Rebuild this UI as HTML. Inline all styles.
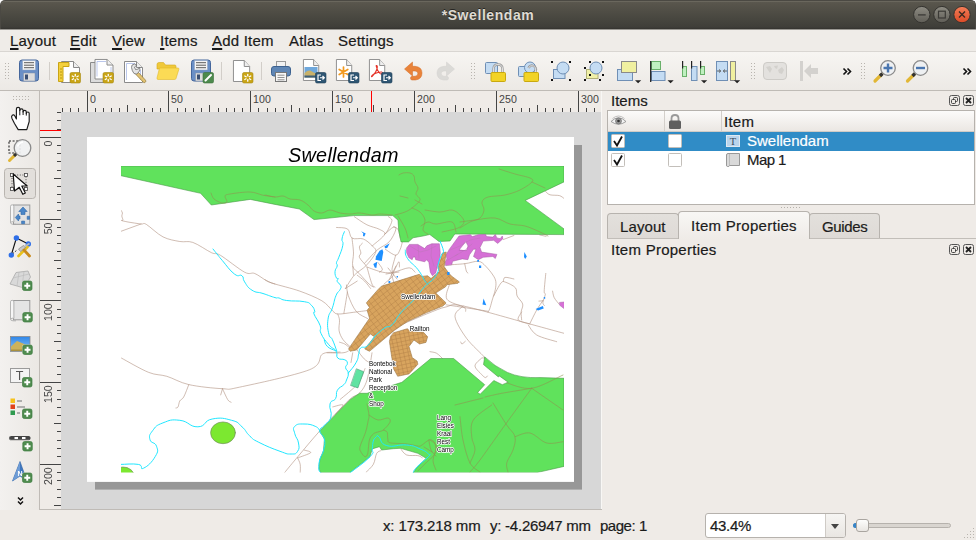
<!DOCTYPE html>
<html><head><meta charset="utf-8"><title>*Swellendam</title>
<style>
*{box-sizing:border-box;margin:0;padding:0}
html,body{width:976px;height:540px;overflow:hidden;background:#f0edea;font-family:"Liberation Sans","DejaVu Sans",sans-serif;font-size:15px;color:#1c1c1c}
.abs{position:absolute}
#win{position:absolute;left:0;top:0;width:976px;height:540px;background:#efebe7;overflow:hidden}
#title{position:absolute;left:0;top:0;width:976px;height:29px;background:linear-gradient(#5b584f 0,#57544b 12%,#47463f 65%,#3f3e39 93%,#34332f 100%);border-radius:5px 5px 0 0;border:1px solid #4b4943;border-bottom:none;box-shadow:inset 0 1px 0 #6a675d}
#title .t{position:absolute;left:-1px;width:976px;top:5px;line-height:18px;text-align:center;font-weight:bold;font-size:14px;color:#dfdbd2;text-shadow:0 -1px 0 #262522;letter-spacing:.58px}
#menubar{position:absolute;left:0;top:29px;width:976px;height:23px;background:#efece8;border-top:1px solid #9a9893;border-bottom:1px solid #d9d6d2}
#menubar span{position:absolute;top:2px;font-size:15px;color:#1a1a1a;white-space:nowrap;letter-spacing:.2px;-webkit-text-stroke:.2px currentColor}
#menubar u{text-decoration:underline;text-underline-offset:2px;text-decoration-thickness:1.5px}
#toolbar{position:absolute;left:0;top:52px;width:976px;height:39px;background:linear-gradient(#f7f5f2,#ece9e5);border-bottom:1px solid #bfbbb6}
#lefttb{position:absolute;left:0;top:91px;width:40px;height:419px;background:linear-gradient(90deg,#f3f1ef,#ebe8e4);border-right:1px solid #bfbbb6}
#hruler{position:absolute;left:40px;top:91px;width:562px;height:21px;background:#efebe7}
#vruler{position:absolute;left:40px;top:112px;width:21px;height:398px;background:#efebe7}
#canvas{position:absolute;left:61px;top:112px;width:540px;height:398px;background:#d7d7d7;overflow:hidden}
.lbl{font-size:15px;white-space:nowrap;color:#1a1a1a;line-height:18px;-webkit-text-stroke:.2px currentColor}
.tab{border:1px solid #b7b3ae;border-bottom:none;border-radius:4px 4px 0 0;background:linear-gradient(#e3e0dc,#dedad6)}
.tab span{position:absolute;white-space:nowrap;line-height:18px;-webkit-text-stroke:.2px currentColor}
.tab.act{background:linear-gradient(#f8f7f5,#efebe7)}
#status{position:absolute;left:0;top:510px;width:976px;height:30px;background:#efebe7}
</style></head><body>
<div id="win">
<div class="abs" style="left:0;top:0;width:976px;height:10px;background:#fff"></div>
<div id="title"><div class="t">*Swellendam</div>
<svg class="abs" style="left:904px;top:-1px" width="70" height="30" viewBox="905 0.600 70 30"><defs><linearGradient id="wg" x1="0" y1="0" x2="0" y2="1"><stop offset="0" stop-color="#8e8c83"/><stop offset="1" stop-color="#5f5d56"/></linearGradient><linearGradient id="wr" x1="0" y1="0" x2="0" y2="1"><stop offset="0" stop-color="#f37e58"/><stop offset="1" stop-color="#dc4a26"/></linearGradient></defs>
<circle cx="921.800" cy="15.200" r="8.200" fill="url(#wg)" stroke="#34332f" stroke-width="1"/><circle cx="941.900" cy="15.200" r="8.200" fill="url(#wg)" stroke="#34332f" stroke-width="1"/><circle cx="962" cy="15.200" r="8.200" fill="url(#wr)" stroke="#34332f" stroke-width="1"/>
<path d="M918 15.500H925.700" stroke="#3b3a36" stroke-width="1.300"/><rect x="938.500" y="11.800" width="6.800" height="6.800" fill="none" stroke="#3b3a36" stroke-width="1.200"/><path d="M959 12.200L965 18.200M965 12.200L959 18.200" stroke="#3b2a20" stroke-width="1.400"/></svg>
</div>
<div id="menubar">
<span style="left:10px"><u>L</u>ayout</span><span style="left:70px"><u>E</u>dit</span><span style="left:112px"><u>V</u>iew</span><span style="left:160px"><u>I</u>tems</span><span style="left:212px"><u>A</u>dd Item</span><span style="left:289px">Atlas</span><span style="left:338px">Settings</span>
</div>
<div id="toolbar"><svg class="abs" style="left:0;top:0" width="976" height="38" viewBox="0 52 976 38">
<defs>
<g id="hd" fill="#b9b5af"><rect x="0" y="0" width="1" height="1"/><rect x="3" y="0" width="1" height="1"/><rect x="0" y="3" width="1" height="1"/><rect x="3" y="3" width="1" height="1"/><rect x="0" y="6" width="1" height="1"/><rect x="3" y="6" width="1" height="1"/><rect x="0" y="9" width="1" height="1"/><rect x="3" y="9" width="1" height="1"/><rect x="0" y="12" width="1" height="1"/><rect x="3" y="12" width="1" height="1"/><rect x="0" y="15" width="1" height="1"/><rect x="3" y="15" width="1" height="1"/></g>
<g id="page"><path d="M.5.5H12.500L18.500 6.500V21.500H.5Z" fill="#fff" stroke="#8a8a8a"/><path d="M12.500.5V6.500H18.500" fill="#eee" stroke="#8a8a8a"/></g>
<g id="star"><rect x="0" y="0" width="10.500" height="10.500" rx="1.500" fill="#c9a415" stroke="#a88a10" stroke-width=".6"/><g stroke="#fff" stroke-width="1.300" stroke-linecap="round"><path d="M5.250 1.800V8.700M2.250 3.500L8.250 7M8.250 3.500L2.250 7"/></g><circle cx="5.250" cy="5.250" r="1.500" fill="#c9a415"/></g>
<g id="exp"><rect x="0" y="0" width="10.500" height="10.500" rx="1.500" fill="#2f5673" stroke="#1f4059" stroke-width=".6"/><path d="M5.500 2.500H2.500V8H5.500M4.500 5.250H8.500M7 3.500L8.800 5.250 7 7" fill="none" stroke="#fff" stroke-width="1.200"/></g>
<g id="floppy"><rect x=".5" y=".5" width="19" height="21" rx="2.500" fill="#6a8fc6" stroke="#44669c"/><rect x="3.500" y="1" width="13" height="9.500" fill="#f4f4f4" stroke="#8aa0c0" stroke-width=".5"/><path d="M5 3.200H15M5 5.700H15M5 8.200H15" stroke="#4a4a4a" stroke-width=".9"/><rect x="4.500" y="13.500" width="11.500" height="8" fill="#dcdcdc" stroke="#7f8fa8" stroke-width=".5"/><rect x="6" y="15" width="3" height="5" fill="#3a4f73"/></g>
<path id="dda" d="M-.5 1.200H5.700L2.600 4.200Z" fill="#222"/>
<g id="sqh" fill="#111"><rect x="0" y="0" width="2" height="2"/></g>
</defs>
<use href="#hd" x="5" y="63"/><use href="#hd" x="471" y="63"/><use href="#hd" x="751" y="63"/><use href="#hd" x="861" y="63"/>
<path d="M49.500 62V80M221.500 62V80M261.500 62V80" stroke="#d2cec9"/>
<!-- save -->
<use href="#floppy" x="19" y="59.500"/>
<!-- new layout -->
<g transform="translate(58 61)"><use href="#page" x="3"/><path d="M.5 1.500H11V5.500H5V20.500H.5Z" fill="#f4d03c" stroke="#c9a415"/><path d="M2 8H4M2 11H4M2 14H4M2 17H4" stroke="#a88a10" stroke-width=".8"/><use href="#star" x="12" y="11.500"/></g>
<!-- duplicate -->
<g transform="translate(90 59)"><path d="M.5 3.500H14.500V23.500H.5Z" fill="#dcdcdc" stroke="#8a8a8a"/><g transform="translate(4.500 0) scale(1 .93)"><use href="#page"/></g><path d="M7 2.500H16M7 2.500V17.500M21 8V17.500" stroke="#a9b9e6" stroke-width=".8" fill="none"/><use href="#star" x="13" y="13.500"/></g>
<!-- manager -->
<g transform="translate(124 61)"><use href="#page" x="0" y="0"/><path d="M2.500 2.500H11M2.500 2.500V19M16.500 9V19" stroke="#a9b9e6" stroke-width=".8" fill="none"/><path d="M14.200 11.200L21.500 19.200Q22.300 20.300 21.300 21.200T19.300 21.200L11.800 13.300Z" fill="#e3c373" stroke="#8c7430" stroke-width=".7"/><path d="M7.500 6.500Q7 3.500 10.500 3L13 4 10.500 6 11.500 8.500 14.500 8 15.500 6Q17 9 14.500 11.500L12.500 13 10 12.500Q8 10 7.500 6.500Z" fill="#e4e4e4" stroke="#6f6f6f" stroke-width=".8" stroke-linejoin="round"/></g>
<!-- folder -->
<g transform="translate(156.500 62)"><path d="M.5 2.500Q.5 .5 2.500 .5H7L9 3H18.500Q19.500 3 19.500 4.500V7H.5Z" fill="#f0c93a" stroke="#d4aa20" stroke-width=".6"/><path d="M3 6H21.500Q22.800 6 22.300 7.500L19.500 16.500Q19.200 17.500 18 17.500H1.500Q.3 17.500 .5 16Z" fill="#fbdb55" stroke="#e0b82a" stroke-width=".6"/></g>
<!-- save as -->
<use href="#floppy" x="191" y="59.500"/>
<g transform="translate(203 72.500)"><rect x="0" y="0" width="10.500" height="10.500" rx="1.500" fill="#4d8a4d" stroke="#3a6e3a" stroke-width=".6"/><path d="M2.500 8L8 2.500" stroke="#fff" stroke-width="2" stroke-linecap="round"/></g>
<!-- new page -->
<g transform="translate(233 60)"><use href="#page" x="0" y="0" transform="scale(.9 1)"/><use href="#star" x="9.500" y="12.500"/></g>
<!-- printer -->
<g transform="translate(271 61)"><rect x="5.500" y=".5" width="9" height="6" fill="#f2f2f2" stroke="#9a9a9a"/><rect x=".5" y="5.500" width="19" height="9.500" rx="2.500" fill="#5f86b5" stroke="#3d6290"/><rect x="4.500" y="11.500" width="11" height="9" fill="#f6f6f6" stroke="#777"/><path d="M6.500 14.200H13.500M6.500 16.500H13.500M6.500 18.800H13.500" stroke="#777" stroke-width=".8"/></g>
<!-- export image -->
<g transform="translate(303 59)"><use href="#page" x="0" y="0" transform="scale(.85 1)"/><rect x="1.500" y="8" width="13" height="10.500" fill="#6fa8dc"/><path d="M1.500 14Q6 10 9 12.500T14.500 13V18.500H1.500Z" fill="#c9b26a"/><path d="M1.500 16.500H14.500V18.500H1.500Z" fill="#3e5f78"/><use href="#exp" x="12.500" y="13.500"/></g>
<!-- export svg -->
<g transform="translate(336 59)"><use href="#page" x="0" y="0" transform="scale(.85 1)"/><g stroke="#f39a1f" stroke-width="1.700" stroke-linecap="round"><path d="M7.500 8V18M3.200 10.500L11.800 15.500M11.800 10.500L3.200 15.500"/></g><use href="#exp" x="12.500" y="13.500"/></g>
<!-- export pdf -->
<g transform="translate(369 59)"><use href="#page" x="0" y="0" transform="scale(.85 1)"/><path d="M7 6.500Q9 6 8 10T3 17.500Q2 18 3 16.500T9 13.500 13.500 14.500Q12 16 10 13.500T7 6.500" fill="none" stroke="#e5332a" stroke-width="1.100"/><use href="#exp" x="12.500" y="13.500"/></g>
<!-- undo -->
<g fill="#e9833a" stroke="#d26a22" stroke-width=".5" stroke-linejoin="round"><path d="M404.500 69L412.500 62V66.300H415Q422 67 422 73T415.500 80H412Q410.500 79.800 410.500 78.200T412 76.300H415Q417.800 76 417.800 73.500T415 71H412.500V76Z"/></g>
<!-- redo -->
<g fill="#dbdad7" stroke="#d2d1ce" stroke-width=".5" stroke-linejoin="round"><path d="M454.500 69L446.500 62V66.300H444Q437 67 437 73T443.500 80H447Q448.500 79.800 448.500 78.200T447 76.300H444Q441.200 76 441.200 73.500T444 71H446.500V76Z"/></g>
<!-- lock -->
<g transform="translate(485 62)"><rect x=".5" y=".5" width="12" height="11" rx="1" fill="#c4dcf3" stroke="#6f8fb5"/><path d="M8.500 11V7Q8.500 2.500 13 2.500T17.500 7V11" fill="none" stroke="#9a9a9a" stroke-width="2.400"/><path d="M8.500 11V7Q8.500 2.500 13 2.500T17.500 7V11" fill="none" stroke="#e0e0e0" stroke-width="1"/><rect x="6" y="10.500" width="14.500" height="9" rx="1" fill="#f2d326" stroke="#c9a90f"/></g>
<!-- unlock -->
<g transform="translate(518 62)"><rect x=".5" y="4.500" width="10" height="10" rx="1" fill="#c4dcf3" stroke="#6f8fb5"/><circle cx="12" cy="5.500" r="5.500" fill="#c4dcf3" stroke="#6f8fb5"/><path d="M10.500 6Q12 2.500 15.500 4T17.500 9V11" fill="none" stroke="#9a9a9a" stroke-width="2.400"/><path d="M10.500 6Q12 2.500 15.500 4T17.500 9V11" fill="none" stroke="#e0e0e0" stroke-width="1"/><rect x="6" y="10.500" width="14.500" height="9" rx="1" fill="#f2d326" stroke="#c9a90f"/></g>
<!-- group -->
<g transform="translate(551 61)"><rect x="2.500" y="8.500" width="11.500" height="9" fill="#c4dcf3" stroke="#6f8fb5"/><circle cx="12" cy="7" r="6" fill="#c4dcf3" stroke="#6f8fb5"/><use href="#sqh" x="0" y="0"/><use href="#sqh" x="18" y="0"/><use href="#sqh" x="0" y="18"/><use href="#sqh" x="18" y="18"/></g>
<!-- ungroup -->
<g transform="translate(584 61)"><rect x="2.500" y="8.500" width="11.500" height="9" fill="#f0f0a8" stroke="#b0b078"/><circle cx="12" cy="7" r="6" fill="#c4dcf3" stroke="#6f8fb5"/><use href="#sqh" x="5" y="0"/><use href="#sqh" x="18" y="0"/><use href="#sqh" x="0" y="6"/><use href="#sqh" x="18" y="13"/><use href="#sqh" x="5" y="13"/><use href="#sqh" x="0" y="18"/><use href="#sqh" x="15" y="18"/></g>
<!-- raise -->
<g transform="translate(617 61)"><rect x=".5" y="8.500" width="15" height="11" fill="#c4dcf3" stroke="#6f8fb5"/><rect x="4.500" y=".5" width="15" height="11" fill="#f0f0a0" stroke="#8a8a8a"/><use href="#dda" x="18.500" y="18"/></g>
<!-- align -->
<g transform="translate(650 61)"><rect x="1.500" y=".5" width="9" height="8" fill="#c0f0c0" stroke="#6ab06a"/><rect x="1.500" y="10.500" width="13.500" height="9" fill="#c4dcf3" stroke="#6f8fb5"/><path d="M.7 0V21" stroke="#222" stroke-width="1.300"/><use href="#dda" x="18" y="18"/></g>
<!-- distribute -->
<g transform="translate(682 61)"><rect x=".5" y="5.500" width="4" height="10" fill="#c0f0c0" stroke="#6ab06a"/><rect x="9.500" y="5.500" width="5.500" height="14" fill="#c4dcf3" stroke="#6f8fb5"/><rect x="18.500" y="5.500" width="4" height="8" fill="#c0f0c0" stroke="#6ab06a"/><path d="M.6 0V7.500M9.600 0V7.500M18.600 0V7.500" stroke="#222" stroke-width="1.200"/><use href="#dda" x="19.500" y="18"/></g>
<!-- resize -->
<g transform="translate(716 61)"><rect x=".5" y=".5" width="11" height="19" fill="#c4dcf3" stroke="#6f8fb5"/><rect x="14.500" y=".5" width="5" height="19" fill="#f0f0a0" stroke="#8a8a8a"/><path d="M1 10H4.500M3 8.500L4.800 10 3 11.500M11 10H7.500M9 8.500L7.200 10 9 11.500" stroke="#555" stroke-width=".9" fill="none"/><use href="#dda" x="18.500" y="18"/></g>
<!-- atlas preview disabled -->
<g transform="translate(763 62)"><rect x=".5" y=".5" width="23" height="17" rx="3.500" fill="#e3e1de" stroke="#cdcbc7"/><path d="M3 5L7 4 9 7 7 11 5 8ZM11 4L15 3.500 14 7 12 6ZM15 8L19 5 21 8 19 12 16 11Z" fill="#d3d1cd"/></g>
<!-- first feature disabled -->
<g transform="translate(798 61)"><rect x="2" y="0" width="3" height="20" fill="#d3d1ce"/><path d="M6 10L13 3V7H20V13H13V17Z" fill="#d3d1ce"/></g>
<!-- chevrons -->
<g fill="none" stroke="#111" stroke-width="1.600"><path d="M843.500 68.500L846.500 71.500 843.500 74.500M847.500 68.500L850.500 71.500 847.500 74.500M963.500 68.500L966.500 71.500 963.500 74.500M967.500 68.500L970.500 71.500 967.500 74.500"/></g>
<!-- zoom in -->
<g id="zin" transform="translate(873 60)"><path d="M2 21L8.500 14.500" stroke="#e2b735" stroke-width="3.200" stroke-linecap="round"/><path d="M7 16L9.500 13.500" stroke="#333" stroke-width="3.200"/><circle cx="15" cy="8" r="7.300" fill="#eef0f2" stroke="#8a8a8a" stroke-width="1.300"/><path d="M15 3.500V12.500M10.500 8H19.500" stroke="#4a76b0" stroke-width="2.400"/></g>
<g transform="translate(905.500 60)"><path d="M2 21L8.500 14.500" stroke="#e2b735" stroke-width="3.200" stroke-linecap="round"/><path d="M7 16L9.500 13.500" stroke="#333" stroke-width="3.200"/><circle cx="15" cy="8" r="7.300" fill="#eef0f2" stroke="#8a8a8a" stroke-width="1.300"/><path d="M10.500 8H19.500" stroke="#4a76b0" stroke-width="2.400"/></g>
</svg>
</div>
<div id="lefttb"><svg class="abs" style="left:0;top:-1px" width="40" height="420" viewBox="0 90 40 420">
<defs>
<g id="plus"><rect x="-.6" y="-.6" width="10.700" height="10.700" rx="2.300" fill="#eef3ee"/><rect x="0" y="0" width="9.500" height="9.500" rx="1.800" fill="#4f8c4f" stroke="#3f7a3f" stroke-width=".7"/><path d="M4.750 1.800V7.700M1.800 4.750H7.700" stroke="#fff" stroke-width="1.900"/></g>
</defs>
<g fill="#b9b5af"><rect x="13" y="96" width="1" height="1"/><rect x="16" y="96" width="1" height="1"/><rect x="19" y="96" width="1" height="1"/><rect x="22" y="96" width="1" height="1"/><rect x="25" y="96" width="1" height="1"/><rect x="28" y="96" width="1" height="1"/><rect x="13" y="99" width="1" height="1"/><rect x="16" y="99" width="1" height="1"/><rect x="19" y="99" width="1" height="1"/><rect x="22" y="99" width="1" height="1"/><rect x="25" y="99" width="1" height="1"/><rect x="28" y="99" width="1" height="1"/></g>
<!-- pan hand -->
<path d="M16.400 119V109Q16.400 107.300 18.100 107.300T19.800 109V110.400Q19.900 108.900 21.500 108.900T23.100 110.500V111.900Q23.200 110.400 24.700 110.400T26.300 112V113.400Q26.400 112 27.800 112T29.200 113.600V121.500L26.800 129.600H18.200L14.500 123.500 12 118.500Q11 116.300 12.300 115.200T15 116.200Z" fill="#fff" stroke="#1a1a1a" stroke-width="1.150" stroke-linejoin="round"/>
<path d="M19.800 109.500V115.300M23.100 111V115M26.300 112.500V115.600" stroke="#1a1a1a" stroke-width="1"/>
<!-- zoom -->
<g><rect x="9" y="141" width="11" height="12" fill="none" stroke="#222" stroke-width="1.100" stroke-dasharray="2 1.600"/><path d="M9.500 160.500L15.500 154.500" stroke="#e2b735" stroke-width="3" stroke-linecap="round"/><path d="M14 156L16.500 153.500" stroke="#333" stroke-width="3"/><circle cx="22.500" cy="148" r="8.300" fill="#f0f1f2" fill-opacity=".92" stroke="#8a8a8a" stroke-width="1.300"/><path d="M17.500 146.500Q19 142.500 23 142" stroke="#fff" stroke-width="1.600" fill="none"/></g>
<!-- select (pressed) -->
<rect x="4.500" y="168.500" width="31" height="30" rx="3" fill="#e2dfdb" stroke="#b9b5b0"/>
<rect x="12" y="175" width="14" height="14" fill="none" stroke="#444" stroke-width=".9" stroke-dasharray="1 1.600"/>
<g fill="#fff" stroke="#444" stroke-width=".8"><rect x="10.500" y="173.500" width="3" height="3"/><rect x="24.500" y="173.500" width="3" height="3"/><rect x="10.500" y="187.500" width="3" height="3"/><rect x="24.500" y="187.500" width="3" height="3"/></g>
<path d="M13.200 174L27.200 186H21.800L25.300 193 22.800 194.300 19.300 187.300 14.500 191Z" fill="#fff" stroke="#111" stroke-width="1.200" stroke-linejoin="round"/>
<!-- move content -->
<g transform="translate(10 204.500)"><rect x="3.500" y=".5" width="16.300" height="19.300" fill="#e2e2e2" stroke="#9a9a9a"/><path d="M.5 1.800Q.5 .3 2.200 .3T3.900 1.800V17.500Q2 16.500 .5 18Z" fill="#f6f6f6" stroke="#a6a6a6" stroke-width=".8"/><path d="M.5 18Q.8 20 3 19.800H6" fill="none" stroke="#a6a6a6" stroke-width=".8"/><g fill="#4a86c8" stroke="#2f68a8" stroke-width=".6" stroke-linejoin="round"><path d="M13 2.500L17.200 7H15V10H11V7H8.800Z"/><path d="M5.300 13L8.500 9.500V11.500H10V14.500H8.500V16.500Z"/><rect x="17.200" y="11.800" width="2.300" height="3"/><rect x="11.600" y="16.600" width="3" height="2.600"/></g></g>
<!-- edit nodes -->
<g><path d="M16.400 238L11.300 255M16.400 238L28.300 244" fill="none" stroke="#111" stroke-width="1.100"/><path d="M11.300 255L17 250" fill="none" stroke="#111" stroke-width="1" stroke-dasharray="1.200 1.200"/><circle cx="16.400" cy="238" r="2.700" fill="#2f6fe8"/><circle cx="11.300" cy="255.100" r="2.700" fill="#2f6fe8"/><circle cx="28.300" cy="244" r="2.700" fill="#2f6fe8"/><path d="M18.500 256L27.500 247" stroke="#e8c11c" stroke-width="2.600" stroke-linecap="round"/><path d="M18.500 249L23.500 245.500 25.500 248 20.500 251.500Z" fill="#c9c9c9" stroke="#777" stroke-width=".6"/><path d="M24 250L29.500 256" stroke="#c98a1c" stroke-width="2.800" stroke-linecap="round"/><path d="M24.500 246.500L29.500 243.500" stroke="#b9b9b9" stroke-width="1.600"/></g>
<!-- add 3d map -->
<g><path d="M10 284L16 272.500 28 271 30.500 277 24 288Z" fill="#d9d9d9" stroke="#a9a9a9" stroke-width=".8"/><path d="M13 278L29 274M19 272L17 286M24 271.500L22 287" stroke="#bdbdbd" stroke-width=".7"/><use href="#plus" x="22.500" y="281"/></g>
<!-- add map -->
<g transform="translate(10 300)"><rect x="3.500" y=".5" width="16.300" height="19.300" fill="#e4e4e4" stroke="#9a9a9a"/><path d="M.5 1.800Q.5 .3 2.200 .3T3.900 1.800V18.500Q2 17.500 .5 19Z" fill="#f6f6f6" stroke="#a6a6a6" stroke-width=".8"/><path d="M.5 19Q.8 21 3 20.800H6" fill="none" stroke="#a6a6a6" stroke-width=".8"/><use href="#plus" x="12.800" y="12.500"/></g>
<!-- add picture -->
<g><defs><linearGradient id="sky" x1="0" y1="0" x2="0" y2="1"><stop offset="0" stop-color="#2f86e8"/><stop offset="1" stop-color="#8cc4f4"/></linearGradient></defs><rect x="10.500" y="336.500" width="19.500" height="15" fill="url(#sky)" stroke="#8a8a8a" stroke-width=".8"/><path d="M11 346.500L17 341 30 346.500V351H11Z" fill="#cdb25a"/><path d="M11 349.500H30V351H11Z" fill="#a8903f"/><use href="#plus" x="22.800" y="345"/></g>
<!-- add label -->
<g><rect x="10.500" y="368.500" width="19" height="14" fill="#f4f4f4" stroke="#9a9a9a"/><text x="19.500" y="380.300" font-family="Liberation Sans, sans-serif" font-size="12.500" text-anchor="middle" fill="#555" style="will-change:transform">T</text><use href="#plus" x="22.500" y="377.500"/></g>
<!-- add legend -->
<g><rect x="10.500" y="398.500" width="4.500" height="4.500" fill="#f6c21c"/><rect x="10.500" y="404.500" width="4.500" height="4.500" fill="#e0431c"/><rect x="10.500" y="410.500" width="4.500" height="4.500" fill="#2f9a4f"/><path d="M17 401H22M17 407H25M17 413H20" stroke="#999" stroke-width="1.300"/><use href="#plus" x="22.500" y="409"/></g>
<!-- add scalebar -->
<g><rect x="9.500" y="436.500" width="20.500" height="3.200" rx="1" fill="#fff" stroke="#444" stroke-width="1"/><path d="M10 438.100H14.500M18 438.100H22M25.500 438.100H30" stroke="#444" stroke-width="2.400"/><use href="#plus" x="22.800" y="441.500"/></g>
<!-- north arrow -->
<g><path d="M20 461.500L12.500 481 20 476 27 481Z" fill="#3f78c0" stroke="#2d5f9f" stroke-width=".6"/><path d="M20 461.500V476L12.500 481Z" fill="#6e9cd6"/><text x="20" y="476" font-family="Liberation Sans, sans-serif" font-size="7" font-weight="bold" text-anchor="middle" fill="#fff">N</text><use href="#plus" x="22.500" y="473"/></g>
<!-- chevron down -->
<path d="M18 497.500L20.500 500 23 497.500M18 501.500L20.500 504 23 501.500" fill="none" stroke="#111" stroke-width="1.500"/>
</svg>
</div>
<div id="hruler"><svg class="abs" style="left:0;top:0" width="562" height="21" viewBox="40 91 562 21" shape-rendering="crispEdges">
<path d="M62.5 108V112M70.5 108V112M78.5 108V112M87.5 91V112M95.5 108V112M103.5 108V112M111.5 108V112M119.5 108V112M127.5 105V112M136.5 108V112M144.5 108V112M152.5 108V112M160.5 108V112M168.5 91V112M177.5 108V112M185.5 108V112M193.5 108V112M201.5 108V112M209.5 105V112M218.5 108V112M226.5 108V112M234.5 108V112M242.5 108V112M250.5 91V112M258.5 108V112M267.5 108V112M275.5 108V112M283.5 108V112M291.5 105V112M299.5 108V112M308.5 108V112M316.5 108V112M324.5 108V112M332.5 91V112M340.5 108V112M349.5 108V112M357.5 108V112M365.5 108V112M373.5 105V112M381.5 108V112M390.5 108V112M398.5 108V112M406.5 108V112M414.5 91V112M422.5 108V112M430.5 108V112M439.5 108V112M447.5 108V112M455.5 105V112M463.5 108V112M471.5 108V112M480.5 108V112M488.5 108V112M496.5 91V112M504.5 108V112M512.5 108V112M521.5 108V112M529.5 108V112M537.5 105V112M545.5 108V112M553.5 108V112M562.5 108V112M570.5 108V112M578.5 91V112M586.5 108V112M594.5 108V112" stroke="#444" stroke-width="1" fill="none"/>
<path d="M371.500 91V112" stroke="#f00" stroke-width="1"/>
<g font-family="Liberation Sans, sans-serif" font-size="10.600" fill="#444" shape-rendering="auto">
<text x="90.1" y="102.800">0</text>
<text x="171.1" y="102.800">50</text>
<text x="253.1" y="102.800">100</text>
<text x="335.1" y="102.800">150</text>
<text x="417.1" y="102.800">200</text>
<text x="499.1" y="102.800">250</text>
<text x="581.1" y="102.800">300</text>
</g></svg></div>
<div id="vruler"><svg class="abs" style="left:0;top:0" width="21" height="398" viewBox="40 112 21 398" shape-rendering="crispEdges">
<path d="M57 112.5H61M57 120.5H61M57 129.5H61M40 137.5H61M57 145.5H61M57 153.5H61M57 161.5H61M57 170.5H61M54 178.5H61M57 186.5H61M57 194.5H61M57 202.5H61M57 210.5H61M40 219.5H61M57 227.5H61M57 235.5H61M57 243.5H61M57 251.5H61M54 260.5H61M57 268.5H61M57 276.5H61M57 284.5H61M57 292.5H61M40 300.5H61M57 309.5H61M57 317.5H61M57 325.5H61M57 333.5H61M54 341.5H61M57 350.5H61M57 358.5H61M57 366.5H61M57 374.5H61M40 382.5H61M57 390.5H61M57 399.5H61M57 407.5H61M57 415.5H61M54 423.5H61M57 431.5H61M57 440.5H61M57 448.5H61M57 456.5H61M40 464.5H61M57 472.5H61M57 480.5H61M57 489.5H61M57 497.5H61M54 505.5H61" stroke="#444" stroke-width="1" fill="none"/>
<path d="M40 130.500H61" stroke="#f00" stroke-width="1"/>
<g font-family="Liberation Sans, sans-serif" font-size="10.600" fill="#444" shape-rendering="auto">
<text transform="translate(52 146.5) rotate(-90)">0</text>
<text transform="translate(52 234.3) rotate(-90)">50</text>
<text transform="translate(52 321.0) rotate(-90)">100</text>
<text transform="translate(52 403.0) rotate(-90)">150</text>
<text transform="translate(52 485.0) rotate(-90)">200</text>
</g></svg></div>
<div id="canvas"><svg class="abs" style="left:0;top:0;will-change:transform" width="540" height="398" viewBox="61 112 540 398">
<rect x="95" y="145" width="487" height="344.600" fill="#979797"/>
<rect x="87" y="137" width="487" height="344.900" fill="#fff"/>
<defs><clipPath id="mc"><rect x="121" y="166" width="443" height="306.600"/></clipPath></defs>
<text x="288" y="162.400" font-family="Liberation Sans, sans-serif" font-style="italic" font-size="19.800" letter-spacing=".3" fill="#000">Swellendam</text>
<g clip-path="url(#mc)" fill="none" stroke-linejoin="round" stroke-linecap="round">
<!-- roads outside -->
<g stroke="#b0907f" stroke-width=".6">
<path d="M121.0 210.4C121.2 210.8 122.4 212.1 122.5 213.0C122.6 213.9 121.7 214.8 121.8 216.0C121.9 217.2 123.0 219.2 123.0 220.0C123.0 220.8 120.7 220.2 121.5 220.5C122.3 220.8 124.8 221.4 128.0 222.0C131.2 222.6 137.9 223.6 141.0 224.0C144.1 224.4 142.8 222.3 146.5 224.5C150.2 226.7 157.4 234.1 163.0 236.9C168.6 239.7 174.8 240.6 179.8 241.5C184.8 242.4 187.6 240.6 192.8 242.4C198.1 244.2 206.7 250.4 211.3 252.6C215.9 254.8 215.1 252.1 220.6 255.4C226.1 258.7 238.9 269.2 244.6 272.2C250.3 275.2 251.1 272.0 254.8 273.5C258.5 275.0 263.5 279.2 266.9 281.0C270.3 282.8 273.6 283.5 275.0 284.0M121.0 231.3L141.0 224.0"/>
<path d="M265.0 279.7C266.4 280.3 267.5 281.6 273.3 283.5C279.1 285.4 291.6 288.2 299.7 291.1C307.8 294.0 316.4 297.6 321.9 300.8C327.3 304.0 329.8 308.3 332.4 310.5C335.0 312.7 334.2 313.7 337.7 314.0C341.2 314.3 348.5 312.9 353.5 312.3C358.5 311.7 365.2 310.8 367.6 310.5M337.7 314.0C338.0 315.0 339.3 317.4 339.5 320.2C339.7 323.0 338.5 327.6 339.1 330.8C339.7 334.0 341.2 337.0 343.0 339.6C344.8 342.2 348.8 345.4 350.0 346.6"/>
<path d="M327.2 352.8C329.8 352.8 339.5 353.1 343.0 352.8C346.5 352.5 347.4 351.3 348.3 351.0"/>
<path d="M346.5 285.0C346.8 286.8 346.7 291.2 348.3 295.6C349.9 300.0 353.0 307.6 356.2 311.4C359.4 315.2 365.7 317.3 367.6 318.5M347.4 292.0C347.1 293.8 346.3 299.1 345.7 302.6C345.1 306.1 344.2 311.4 343.9 313.2M339.5 342.2C340.4 342.5 343.2 343.1 344.8 344.0C346.4 344.9 348.5 346.9 349.2 347.5M352.7 352.8L351.0 362.5M357.1 350.1C358.3 351.6 362.1 356.8 364.2 358.9C366.2 361.0 368.5 361.9 369.4 362.5"/>
<path d="M121.5 358.1C126.0 360.5 141.1 369.4 148.7 372.4C156.2 375.4 160.1 374.3 166.8 376.3C173.5 378.3 179.5 382.5 188.8 384.6C198.1 386.7 214.1 388.3 222.5 388.7C230.9 389.1 224.9 390.3 239.4 387.2C253.9 384.1 295.5 375.3 309.3 369.8C323.1 364.3 318.0 357.1 322.3 354.2C326.6 351.3 332.1 352.8 335.0 352.4C337.9 352.0 339.2 352.1 340.0 352.0M188.8 384.6C188.0 386.7 185.2 394.3 183.7 397.0C182.2 399.7 180.8 399.2 179.8 400.9C178.9 402.6 178.7 405.8 178.0 407.0C177.3 408.2 176.2 407.8 175.9 407.9M222.5 388.7L220.7 394.9M222.5 388.7C223.4 390.5 226.3 397.4 227.7 399.6C229.1 401.9 230.5 401.8 231.1 402.2"/>
<path d="M284.6 472.6C286.9 469.8 292.6 462.8 298.5 455.9C304.4 448.9 311.5 440.1 319.8 430.9C328.1 421.6 341.9 406.7 348.5 400.4C355.1 394.1 356.5 396.4 359.6 393.0C362.7 389.6 364.9 386.7 367.0 380.0C369.1 373.3 371.2 357.3 372.0 352.8M297.6 457.9C298.0 459.0 299.8 461.9 300.2 464.4C300.6 466.8 300.2 471.2 300.2 472.6M297.6 457.9C299.8 457.0 309.5 454.0 310.6 452.7C311.7 451.4 305.2 450.5 304.1 450.1M340.2 399.4C343.1 396.8 353.7 388.8 357.8 383.7C361.9 378.6 363.8 371.1 365.0 368.6M332.8 406.9C334.5 406.6 342.5 403.8 343.0 405.0C343.5 406.2 336.8 412.8 335.6 414.3"/>
<path d="M366.1 472.2C367.3 470.9 371.5 467.5 373.3 464.4C375.1 461.2 375.4 455.6 376.7 453.3C378.0 451.0 380.4 451.1 381.1 450.6M400.6 448.7C401.6 449.8 403.8 453.9 406.7 455.0C409.6 456.1 415.2 455.1 417.8 455.6C420.4 456.1 421.5 457.4 422.2 457.8"/>

<!-- east roads -->
<path d="M446.0 265.0C449.1 264.8 459.3 264.3 464.7 263.7C470.1 263.1 474.9 260.9 478.4 261.3C481.9 261.7 483.2 263.8 485.6 266.1C488.0 268.4 491.2 272.4 492.9 275.0C494.6 277.6 495.4 279.1 495.8 281.5C496.2 283.9 495.9 286.3 495.3 289.5C494.7 292.7 492.9 297.6 492.0 300.8C491.1 304.0 490.4 307.0 489.7 308.9C489.0 310.8 488.3 311.5 488.0 312.0M464.7 263.7C465.0 264.9 465.8 269.4 466.3 271.0C466.8 272.6 467.6 272.7 467.9 273.0"/>
<path d="M493.7 296.0C494.9 293.8 499.0 285.3 501.0 283.0C503.0 280.7 503.4 281.5 505.8 282.3C508.2 283.1 513.6 285.6 515.5 287.9C517.4 290.2 515.9 293.3 517.1 296.0C518.3 298.7 522.0 301.3 522.7 304.0C523.4 306.7 521.3 309.3 521.1 312.0C520.9 314.7 521.6 318.7 521.7 320.0M503.4 281.5C503.7 280.8 503.2 277.8 505.0 277.4C506.8 277.0 512.4 278.7 513.9 279.0"/>
<path d="M545.8 273.4C545.5 276.3 544.3 287.6 544.2 291.1C544.1 294.6 545.5 292.5 545.3 294.4C545.1 296.3 543.0 300.5 542.9 302.4C542.8 304.3 544.2 305.1 544.5 305.6M552.6 291.1C552.9 292.2 553.1 295.5 554.2 297.6C555.3 299.8 558.2 302.9 559.0 304.0M538.9 301.1L542.9 300.8"/>
<path d="M449.4 284.7C449.0 287.1 444.5 295.4 446.9 299.2C449.3 303.0 460.8 305.3 463.9 307.3C467.0 309.3 465.2 310.6 465.5 311.3M446.0 304.8C451.4 305.6 471.4 308.6 478.4 309.7C485.4 310.8 486.4 311.0 488.0 311.3"/>
<path d="M503.4 239.5L513.9 235.5M539.7 235.0L546.0 236.3"/>
<path d="M545.6 191.5C546.3 192.1 547.7 194.1 550.0 194.8C552.3 195.5 557.1 195.0 559.4 195.6C561.7 196.2 563.2 198.0 564.0 198.5"/>
<path d="M397.7 326.3C402.6 324.2 418.7 317.1 426.8 313.9C434.9 310.7 440.0 308.2 446.1 306.9C452.2 305.6 449.3 303.1 463.3 306.0C477.3 308.9 513.2 319.4 530.0 324.0C546.8 328.6 558.3 331.8 564.0 333.3"/>
<path d="M463.3 306.0C461.9 307.8 454.4 311.3 455.0 316.7C455.6 322.1 461.8 331.8 466.7 338.5C471.6 345.2 481.6 353.6 484.1 356.9C486.6 360.2 483.0 356.7 481.5 358.2C480.0 359.7 475.0 363.2 475.0 365.9C475.0 368.6 479.8 372.4 481.5 374.4C483.2 376.3 484.4 377.3 485.4 377.6C486.4 377.9 487.0 376.3 487.3 376.0M460.8 342.0C461.0 342.3 461.2 344.0 462.0 343.9C462.8 343.8 464.8 341.7 465.3 341.3"/>
<path d="M430.0 351.7C431.1 352.0 434.5 352.0 436.7 353.3C438.9 354.6 442.2 358.3 443.3 359.3"/>
<path d="M530.0 324.0C528.0 323.3 519.7 322.0 518.3 320.0C516.9 318.0 521.1 313.3 521.7 312.0M528.3 325.0C529.7 326.7 532.0 332.2 536.7 335.0C541.4 337.8 553.4 340.6 556.7 341.7M530.0 323.3C531.1 321.1 534.5 313.9 536.7 310.0C538.9 306.1 542.2 301.7 543.3 300.0"/>

</g>

<!-- center road network -->
<g stroke="#b0907f" stroke-width=".6">
<path d="M336.5 227.5C338.4 227.8 345.0 227.2 347.6 229.0C350.2 230.8 349.4 236.4 352.0 238.1C354.6 239.8 359.8 237.7 363.1 238.9C366.4 240.2 369.9 243.4 372.0 245.6C374.1 247.8 376.7 248.9 375.7 252.2C374.7 255.5 369.7 261.8 366.1 265.6C362.5 269.4 357.8 271.4 354.3 275.2C350.9 279.0 346.9 286.3 345.4 288.5"/>
<path d="M352.0 238.1C352.2 240.6 353.4 248.3 353.5 253.0C353.6 257.7 351.8 262.9 352.8 266.3C353.8 269.8 356.7 270.7 359.4 273.7C362.1 276.7 366.8 281.9 369.1 284.1C371.5 286.3 372.8 286.5 373.5 287.0M362.4 243.3C361.9 243.9 359.6 245.4 359.4 247.0C359.1 248.6 360.9 251.3 360.9 253.0C360.9 254.7 358.5 255.3 359.4 257.4C360.3 259.5 365.0 264.2 366.1 265.6"/>
<path d="M354.3 216.7C356.4 218.0 362.7 222.7 366.9 224.8C371.1 226.9 376.4 227.7 379.4 229.3C382.3 230.9 385.6 231.8 384.6 234.4C383.6 237.0 375.6 242.9 373.5 244.8C371.4 246.7 372.2 245.5 372.0 245.6M384.6 234.4C386.1 233.2 391.6 227.7 393.5 227.0C395.4 226.3 396.4 227.5 395.7 230.0C395.0 232.5 392.2 238.6 389.1 241.9C386.0 245.2 381.3 246.4 377.2 250.0C373.1 253.6 366.7 261.1 364.6 263.3"/>
<path d="M385.4 249.3C387.1 250.3 393.2 255.2 395.7 255.2C398.2 255.2 399.1 251.5 400.2 249.3C401.3 247.1 402.0 243.1 402.4 241.9M395.7 255.2C395.1 257.6 392.4 266.0 392.0 269.3C391.6 272.6 394.9 272.7 393.5 275.2C392.1 277.7 385.5 282.6 383.9 284.1"/>
<path d="M366.9 267.0C369.5 267.9 378.0 271.3 382.4 272.2C386.8 273.1 389.1 272.9 393.5 272.2C397.9 271.5 405.5 267.8 409.1 267.8C412.7 267.8 414.0 271.5 415.0 272.2M378.0 262.6C378.7 263.7 382.2 267.7 382.4 269.3C382.6 270.9 379.9 271.7 379.4 272.2M393.5 272.2C394.4 270.5 397.7 262.8 398.7 261.9C399.7 261.0 399.3 266.1 399.4 267.0M391.3 273.7L394.3 284.1M352.8 266.3L353.5 275.2"/>
<path d="M366.9 267.0C367.8 269.9 370.6 280.8 372.0 284.1C373.4 287.4 374.5 286.5 375.0 287.0M388.3 216.7C388.9 217.3 392.0 218.3 392.0 220.4C392.0 222.5 389.4 227.1 388.3 229.3C387.2 231.5 385.9 233.0 385.4 233.7M393.5 227.0C394.2 227.4 396.9 227.5 398.0 229.3C399.1 231.2 399.8 236.6 400.2 238.1M357.2 281.1L345.4 288.5M357.2 275.2C358.4 276.2 362.4 278.9 364.6 281.1C366.8 283.3 369.6 287.3 370.6 288.5"/>
<path d="M388.0 268.0L397.0 279.0M396.0 266.0L389.0 280.0M386.0 274.0L399.0 272.0"/>
</g>
<!-- north green -->
<path fill="#60e25c" stroke="#4c9a49" stroke-width=".6" d="M121 166H564V181.900L525.200 200.400 564 228.900V234.600L454.800 234 450 241 439 241.500 429.800 234.500 423 236 413 237.800 408.500 241.900H401L398.700 230.400 398 220.200 392.800 215.600H353.900L314 219.600 299.300 209 275 204.400 250.200 199.400 211.300 205 200.600 193.300 121 175.700Z"/>
<!-- south green -->
<path fill="#60e25c" stroke="#4c9a49" stroke-width=".6" d="M319.800 430.900L350.400 399.400 359.600 393.300H367.100L401.900 382.300 430.800 358.500H453.600L484.700 384.700 477.600 392.500 480.200 394.200 493.800 380.500 502.300 384.700 508.100 382.200 499 375.700 498.400 377 483.500 364.600 484.700 356.900Q494.500 366.500 507.400 372.400T540 377.600L564 378.300V466.400L537 472.600H413.300L416.700 467.800 426.100 458.300 417.800 453.300 400.600 448.300 393.300 448.700 381.700 450 379.400 446.700 372.200 448.900 370 456.700 350 472.600H320.700L318.900 468.900 319.800 459.600 323.500 450.400 324.400 439.300Z"/>
<!-- roads inside green -->
<g stroke="#8f9450" stroke-width=".6">
<path d="M265.0 195.0C266.7 195.3 272.0 196.8 275.0 197.0C278.0 197.2 280.5 195.7 283.0 196.0C285.5 196.3 287.2 198.3 290.0 199.0C292.8 199.7 297.0 199.0 300.0 200.0C303.0 201.0 305.7 203.2 308.0 205.0C310.3 206.8 311.7 209.7 314.0 211.0C316.3 212.3 319.3 213.2 322.0 213.0C324.7 212.8 327.0 210.0 330.0 210.0C333.0 210.0 336.7 212.3 340.0 213.0C343.3 213.7 346.7 214.0 350.0 214.0C353.3 214.0 356.3 212.8 360.0 213.0C363.7 213.2 368.7 214.8 372.0 215.0C375.3 215.2 376.7 214.0 380.0 214.0C383.3 214.0 390.0 214.8 392.0 215.0"/>
<path d="M211.0 193.0C211.5 194.0 212.2 197.3 214.0 199.0C215.8 200.7 219.8 202.5 222.0 203.0C224.2 203.5 226.5 203.2 227.0 202.0C227.5 200.8 224.5 197.3 225.0 196.0C225.5 194.7 225.8 194.7 230.0 194.0C234.2 193.3 244.7 191.8 250.0 192.0C255.3 192.2 259.0 194.3 262.0 195.0C265.0 195.7 265.8 195.7 268.0 196.0C270.2 196.3 273.8 196.8 275.0 197.0"/>
<path d="M399.0 175.0C399.7 174.7 401.2 173.3 403.0 173.0C404.8 172.7 408.2 172.5 410.0 173.0C411.8 173.5 413.2 174.5 414.0 176.0C414.8 177.5 414.3 180.0 415.0 182.0C415.7 184.0 417.8 186.0 418.0 188.0C418.2 190.0 415.7 192.0 416.0 194.0C416.3 196.0 420.7 197.7 420.0 200.0C419.3 202.3 414.5 206.0 412.0 208.0C409.5 210.0 407.8 210.8 405.0 212.0C402.2 213.2 396.7 214.5 395.0 215.0M412.0 208.0C413.3 208.7 417.8 210.0 420.0 212.0C422.2 214.0 424.5 217.0 425.0 220.0C425.5 223.0 422.5 227.7 423.0 230.0C423.5 232.3 427.2 233.3 428.0 234.0M425.0 210.0C427.5 210.3 435.5 212.0 440.0 212.0C444.5 212.0 448.7 209.5 452.0 210.0C455.3 210.5 458.0 213.0 460.0 215.0C462.0 217.0 464.3 219.8 464.0 222.0C463.7 224.2 461.7 226.3 458.0 228.0C454.3 229.7 444.7 231.3 442.0 232.0M398.0 216.0C399.2 218.0 403.3 224.3 405.0 228.0C406.7 231.7 407.5 236.3 408.0 238.0"/>
<path d="M499.0 169.0C501.7 169.8 509.8 172.5 515.0 174.0C520.2 175.5 527.2 176.7 530.0 178.0C532.8 179.3 533.7 180.0 532.0 182.0C530.3 184.0 524.5 187.8 520.0 190.0C515.5 192.2 510.3 193.8 505.0 195.0C499.7 196.2 491.8 195.8 488.0 197.0C484.2 198.2 482.7 199.8 482.0 202.0C481.3 204.2 484.3 207.3 484.0 210.0C483.7 212.7 482.3 216.0 480.0 218.0C477.7 220.0 473.3 220.3 470.0 222.0C466.7 223.7 461.7 227.0 460.0 228.0M532.0 182.0L545.0 188.0M460.0 222.0C462.5 221.7 469.2 220.7 475.0 220.0C480.8 219.3 489.2 217.3 495.0 218.0C500.8 218.7 505.0 222.7 510.0 224.0C515.0 225.3 520.0 224.7 525.0 226.0C530.0 227.3 536.2 230.3 540.0 232.0C543.8 233.7 546.7 235.3 548.0 236.0"/>
<path d="M421.0 226.0C422.2 225.3 425.5 222.3 428.0 222.0C430.5 221.7 432.0 224.0 436.0 224.0C440.0 224.0 448.7 220.7 452.0 222.0C455.3 223.3 455.3 230.3 456.0 232.0M415.0 200.0L422.0 204.0M400.0 196.0L408.0 198.0"/>
<path d="M507.0 383.0C511.1 383.9 522.4 389.6 531.7 388.3C541.0 387.0 557.8 377.2 563.0 375.0M531.7 388.3C527.2 394.4 513.6 413.1 505.0 425.0C496.4 436.9 485.8 452.2 480.0 460.0C474.2 467.8 471.7 470.0 470.0 472.0M531.7 388.3L563.0 410.0M485.0 397.0C487.8 396.4 493.9 394.8 501.7 393.3C509.5 391.9 526.7 389.1 531.7 388.3"/>
<path d="M455.0 405.0C456.3 404.7 458.3 404.2 463.0 403.0C467.7 401.8 479.7 398.8 483.0 398.0M460.0 416.7C460.5 420.6 461.3 432.3 463.0 440.0C464.7 447.7 467.2 457.7 470.0 463.0C472.8 468.3 478.3 470.5 480.0 472.0M491.7 405.0C488.6 407.5 476.6 414.7 473.3 420.0C470.0 425.3 471.4 431.7 471.7 436.7C472.0 441.7 475.3 445.6 475.0 450.0C474.7 454.4 470.8 460.8 470.0 463.0"/>
<path d="M493.0 403.0C495.3 406.7 503.0 419.4 506.7 425.0C510.4 430.6 514.0 432.5 515.0 436.7C516.0 440.9 514.4 445.6 513.0 450.0C511.6 454.4 507.5 459.3 506.7 463.0C505.9 466.7 507.8 470.5 508.0 472.0M515.0 436.7C517.5 436.1 524.7 431.9 530.0 433.0C535.3 434.1 541.2 441.6 546.7 443.0C552.2 444.4 560.3 441.9 563.0 441.7M430.0 440.0C431.1 441.1 436.2 443.4 436.7 446.7C437.2 450.0 433.1 456.1 433.0 460.0C432.9 463.9 435.5 468.3 436.0 470.0"/>
<path d="M367.0 404.0C367.3 405.8 368.8 412.3 369.0 415.0C369.2 417.7 368.9 417.1 368.3 420.0C367.7 422.9 367.0 427.8 365.6 432.2C364.2 436.6 360.8 443.4 360.0 446.7C359.2 450.0 360.3 450.5 361.1 452.2C361.9 453.9 363.9 456.5 365.0 456.7C366.1 456.9 367.1 456.1 367.8 453.3C368.5 450.5 368.5 443.2 369.4 440.0C370.3 436.8 371.7 435.3 373.3 433.9C374.9 432.5 377.2 432.3 378.9 431.7C380.6 431.1 381.4 431.6 383.3 430.0C385.2 428.4 389.2 424.2 390.0 422.2C390.8 420.2 390.0 418.4 388.0 418.0C386.0 417.6 381.2 420.5 378.0 420.0C374.8 419.5 370.5 415.8 369.0 415.0M383.3 430.0C383.9 430.4 386.4 430.7 387.2 432.2C387.9 433.7 387.3 437.1 387.8 438.9C388.3 440.7 386.9 442.0 390.0 442.8C393.1 443.6 402.1 443.3 406.7 443.9C411.3 444.4 415.4 445.8 417.8 446.1C420.2 446.4 419.2 446.6 421.1 445.6C423.0 444.6 426.9 440.8 428.9 440.0C430.9 439.2 432.2 440.2 433.3 441.1C434.4 442.0 435.4 443.4 435.6 445.6C435.8 447.8 435.9 451.6 434.4 454.4C432.9 457.2 429.5 459.4 426.7 462.2C423.9 465.0 419.3 469.6 417.8 471.1M428.9 440.0C429.2 441.7 429.8 447.3 431.0 450.0C432.2 452.7 435.2 455.0 436.0 456.0M424.0 447.0L432.0 452.0"/>
</g>
<!-- lime -->
<ellipse cx="223" cy="432.800" rx="12.400" ry="10.900" fill="#7ce830" stroke="#6f7f5f" stroke-width=".6"/>
<ellipse cx="123" cy="475.500" rx="11" ry="8.500" fill="#7ce830" stroke="#6f7f5f" stroke-width=".6"/>
<!-- teal -->
<path fill="#60e3a2" stroke="#3f9a70" stroke-width=".6" d="M356.700 368.900L363.700 371.700 357.900 387.900 350.900 385.600Z"/>
<!-- magenta -->
<g fill="#d670d6" stroke="#a25aa2" stroke-width=".5">
<path d="M406.700 247.900L409.400 244.400H417.800L424.700 248.600 426.800 245.800 431.700 243.750H439.300L440.300 252.800 439.300 261.100 437.200 266.700 435.800 272.900 432.400 275.700 430.300 272.200 428.900 262.500 426.800 259.700 424.700 261.800 415.700 259.700 415 256.900 412.900 257.200 412.200 259.700 408.750 257.600 406.700 252.800Z"/>
<path fill-rule="evenodd" d="M445.600 265.300L445.300 261.800 446.900 258.900 446.100 254.800 449.400 249.200 459 236 470.300 234.700 472.300 236.600 478.400 234.700 485.600 234.400 486.500 236.600 492.900 237.100 495.300 234.400 496.900 237.900 500.200 238.700 502.300 236 502.900 238.700 497.700 243.500 493.700 240.300 483.200 241.100 480 247.600 481.600 252.100 496.900 254.400 495.300 258.500 492.900 256.500 483.200 257.300 478.400 259.700 473.500 256.500 476 249.200H473.500L469.500 254.800 467.900 259.700 462.300 258.900 452.600 261.300 451.800 264.500ZM459.200 249.800L465.800 241.600 468 246 466.500 250.300Z"/>
<path d="M559.800 302.400L564.500 302V309L559.800 305.300Z"/>
</g>
<g stroke="#b777b0" stroke-width=".4"><path d="M410 246L420 252 428 250 436 246M432 244L431 256 434 266M418 245L419 258M450 250L460 246 470 240 480 238M455 256L465 250 472 244M448 260L458 254"/></g>
<!-- town -->
<g fill="#d8a45e" stroke="#8d6a3c" stroke-width=".5">
<path id="tw" d="M381.700 286.100L419.200 274.300 421.900 276.400 427.500 275.700 431 278.500 439.300 271.500 437.900 268 442.800 252.800 446.250 252 444.200 266.700 447.600 271.500 451.100 275.700 459.400 281.900 458 283.300 446.900 284.700 445.600 286.800 435.800 293 446.100 302.900 442.900 306.100 426.800 312.600 407.400 321.500 394.500 330.300 369.500 351.300 364.700 348.900 374.400 336.800 370.300 333.900 356.600 350 350.200 351.300 348.500 348.900 369.500 318.200 367.100 310.200 369.500 307.400 366.300 302.900 377.600 290Z"/>
<path id="rl" d="M393.700 332.700L407.400 328.700 409.800 331.100 423.500 332.300 427.600 336.800 426 342.400 419.500 344 413.900 340 409 346.500 412.300 357.700 417.100 361 417.900 364.200 409 373.900 397.700 376.300 393.700 369 391.300 354.500 389.400 341.600 390.500 336.800Z"/>
</g>
<clipPath id="twc"><use href="#tw"/></clipPath><clipPath id="rlc"><use href="#rl"/></clipPath>
<g clip-path="url(#twc)" stroke="#b08048" stroke-width=".45"><path d="M322.8 313.4L433.1 227.2M325.5 316.9L435.8 230.7M328.2 320.4L438.5 234.2M330.9 323.8L441.2 237.6M333.6 327.3L443.9 241.1M336.3 330.8L446.6 244.6M339.0 334.2L449.3 248.0M341.7 337.7L452.0 251.5M344.4 341.2L454.7 255.0M347.1 344.6L457.5 258.4M349.8 348.1L460.2 261.9M352.5 351.6L462.9 265.4M355.3 355.0L465.6 268.8M358.0 358.5L468.3 272.3M360.7 362.0L471.0 275.8M363.4 365.4L473.7 279.2M366.1 368.9L476.4 282.7M368.8 372.4L479.1 286.2M371.5 375.8L481.8 289.6M374.2 379.3L484.5 293.1M376.9 382.8L487.2 296.6M296.3 301.1L382.5 411.4M300.4 297.9L386.6 408.2M304.5 294.7L390.7 405.0M308.6 291.5L394.8 401.8M312.7 288.3L398.9 398.6M316.8 285.1L403.0 395.4M320.9 281.9L407.1 392.2M325.0 278.7L411.2 389.0M329.1 275.5L415.3 385.8M333.2 272.2L419.4 382.6M337.3 269.0L423.5 379.4M341.4 265.8L427.6 376.2M345.5 262.6L431.7 373.0M349.6 259.4L435.8 369.8M353.7 256.2L439.9 366.6M357.8 253.0L444.0 363.4M361.9 249.8L448.1 360.2M366.0 246.6L452.2 357.0M370.1 243.4L456.3 353.8M374.2 240.2L460.4 350.6M378.3 237.0L464.5 347.4M382.4 233.8L468.6 344.2M386.5 230.6L472.7 341.0M390.6 227.4L476.8 337.8M394.7 224.2L480.9 334.5M398.8 221.0L485.0 331.3M402.9 217.8L489.1 328.1M407.0 214.6L493.2 324.9M411.1 211.4L497.3 321.7M415.2 208.2L501.4 318.5M419.3 205.0L505.5 315.3M423.4 201.8L509.6 312.1M427.5 198.6L513.7 308.9"/></g>
<g clip-path="url(#rlc)" stroke="#b08048" stroke-width=".45"><path d="M362.6 330.6L440.8 313.9M363.3 334.3L441.6 317.7M364.1 338.0L442.4 321.4M364.9 341.7L443.2 325.1M365.7 345.4L444.0 328.8M366.5 349.2L444.8 332.5M367.3 352.9L445.5 336.2M368.1 356.6L446.3 340.0M368.9 360.3L447.1 343.7M369.7 364.0L447.9 347.4M370.5 367.8L448.7 351.1M371.2 371.5L449.5 354.8M372.0 375.2L450.3 358.6M372.8 378.9L451.1 362.3M373.6 382.6L451.9 366.0M374.4 386.3L452.7 369.7M375.2 390.1L453.4 373.4M365.3 320.2L381.9 398.4M369.6 319.3L386.2 397.5M373.9 318.4L390.5 396.6M378.2 317.4L394.8 395.7M382.5 316.5L399.1 394.8M386.8 315.6L403.4 393.9M391.1 314.7L407.7 393.0M395.4 313.8L412.0 392.0M399.7 312.9L416.3 391.1M404.0 312.0L420.6 390.2M408.3 311.0L424.9 389.3M412.6 310.1L429.2 388.4M416.9 309.2L433.5 387.5M421.2 308.3L437.8 386.6M425.5 307.4L442.1 385.6M429.8 306.5L446.4 384.7M434.1 305.6L450.7 383.8"/></g>
<!-- rivers -->
<g stroke="#20e6ff" stroke-width="1">
<path d="M213.0 249.0C214.3 250.6 215.3 251.9 217.8 255.0C220.3 258.1 218.0 255.5 222.4 260.6C226.8 265.7 229.2 270.0 234.4 274.0C239.6 278.0 239.2 273.6 241.9 275.7C244.6 277.8 241.9 278.0 244.6 281.9C247.3 285.8 247.1 287.1 252.0 290.2C256.9 293.3 256.9 291.5 263.0 293.5C269.1 295.5 270.8 296.4 275.0 297.6C279.2 298.8 275.8 297.2 278.9 298.0C282.0 298.8 279.9 299.5 286.7 300.5C293.5 301.5 297.7 300.4 304.3 301.7C310.9 303.0 308.5 302.6 311.3 305.2C314.1 307.8 314.1 309.1 314.8 311.4C315.5 313.7 312.6 310.2 314.0 314.0C315.4 317.8 318.2 320.3 320.1 325.5C322.0 330.7 318.7 328.3 321.0 333.4C323.3 338.5 324.9 340.1 328.9 344.8C332.9 349.5 333.7 347.5 336.0 351.0C338.3 354.5 335.4 355.7 337.7 358.0C340.0 360.3 342.2 358.4 344.8 359.8C347.4 361.2 347.2 361.2 347.4 363.3C347.6 365.4 345.4 365.1 345.6 367.7C345.8 370.3 348.1 369.7 348.3 373.0C348.5 376.3 347.7 376.9 346.5 380.0C345.3 383.1 346.3 381.9 343.9 384.6C341.5 387.3 339.6 386.5 337.4 390.2C335.2 393.9 337.6 394.8 335.6 398.5C333.6 402.2 331.3 399.1 330.0 404.0C328.7 408.9 332.4 411.3 330.9 417.0C329.4 422.7 327.4 421.7 324.4 425.4C321.4 429.1 319.8 427.2 319.8 430.9C319.8 434.6 323.4 434.1 324.4 439.3C325.4 444.5 324.7 445.0 323.5 450.4C322.3 455.8 321.0 454.7 319.8 459.6C318.6 464.5 318.7 465.4 318.9 468.9C319.1 472.4 320.2 471.6 320.7 472.6"/>
<path d="M344.4 231.7C343.8 233.6 342.4 235.4 342.0 239.0C341.6 242.6 343.7 240.3 342.8 245.3C341.9 250.3 340.3 253.2 338.6 257.8C336.9 262.4 336.9 260.4 336.5 262.6C336.1 264.8 337.6 263.6 337.2 266.0C336.8 268.4 335.2 268.5 335.0 271.7C334.8 274.9 335.6 276.2 336.5 278.0C337.4 279.8 338.1 277.7 338.3 278.6C338.5 279.5 336.6 279.5 337.2 281.4C337.8 283.3 340.0 283.4 340.7 285.6C341.4 287.8 341.3 287.0 340.0 289.7C338.7 292.4 338.0 290.7 336.0 295.6C334.0 300.5 334.5 301.6 332.4 307.9C330.3 314.2 328.9 312.3 328.0 319.3C327.1 326.3 327.7 328.9 328.9 334.3C330.1 339.7 330.3 335.1 332.4 339.6C334.5 344.1 335.6 348.0 336.8 351.0"/>
<path d="M375.0 336.0C373.0 338.6 371.4 342.5 367.6 345.7C363.8 348.9 362.9 345.9 360.6 348.0C358.3 350.1 360.0 349.8 358.8 353.6C357.6 357.4 359.0 357.2 356.2 362.4C353.4 367.6 350.4 370.2 348.3 373.0"/>
<path d="M440.0 241.0C440.9 243.8 443.1 247.7 443.5 251.4C443.9 255.1 442.9 251.2 441.4 254.9C439.9 258.6 438.6 261.4 437.9 265.3C437.2 269.2 439.5 266.1 438.6 269.4C437.7 272.7 437.2 274.1 434.4 277.8C431.6 281.5 431.2 280.5 428.2 283.3C425.2 286.1 427.1 283.8 423.3 288.2C419.5 292.6 419.8 293.2 413.9 299.7C408.0 306.2 406.8 305.9 401.0 312.6C395.2 319.3 396.4 320.6 392.1 324.7C387.8 328.8 389.4 324.9 384.8 327.9C380.2 330.9 377.6 333.8 375.0 336.0"/>
<path d="M405.3 250.0C405.9 252.2 404.1 253.1 407.4 258.3C410.7 263.5 413.2 263.5 417.8 269.4C422.4 275.3 422.1 276.7 424.7 280.6C427.3 284.5 426.8 283.1 427.5 284.0"/>
<path d="M121.0 464.4C125.6 464.4 132.3 463.4 138.3 464.4C144.3 465.4 139.0 470.3 143.5 468.2C148.0 466.1 151.7 462.5 155.2 456.6C158.7 450.7 157.9 450.7 156.5 446.2C155.1 441.7 151.0 443.8 150.0 439.7C149.0 435.6 149.2 435.2 152.6 430.7C156.0 426.2 155.6 425.7 162.9 422.9C170.2 420.1 170.5 419.3 179.8 420.3C189.1 421.3 189.3 427.1 197.9 426.8C206.5 426.5 203.2 420.7 212.2 419.0C221.2 417.3 223.7 418.2 231.6 420.3C239.5 422.4 237.2 422.6 242.0 426.8C246.8 431.0 245.2 431.8 249.7 435.9C254.2 440.0 250.7 438.2 258.8 442.3C266.9 446.4 271.4 448.2 280.0 451.3C288.6 454.4 286.4 454.0 291.1 454.0C295.8 454.0 295.6 454.2 297.6 451.3C299.6 448.4 299.2 447.7 298.5 443.0C297.8 438.3 295.8 438.2 294.8 433.7C293.8 429.2 292.3 428.9 294.8 426.3C297.3 423.7 298.6 424.0 304.0 424.0C309.4 424.0 311.0 424.5 315.2 426.3C319.4 428.1 318.6 429.7 319.8 430.9"/>
<path d="M324.3 340.0C325.1 341.7 324.5 343.7 327.4 346.5C330.3 349.3 333.0 349.4 335.0 350.4"/>
<path d="M350.0 472.8C355.3 468.5 364.1 463.1 370.0 456.7C375.9 450.3 371.3 453.1 372.2 448.9C373.1 444.7 372.3 444.2 373.3 441.1C374.3 438.0 374.6 438.4 376.1 437.2C377.6 436.0 376.1 434.5 378.9 436.7C381.7 438.9 379.3 443.4 386.7 445.6C394.1 447.8 397.8 444.1 406.7 445.0C415.6 445.9 414.2 446.5 420.0 448.9C425.8 451.3 426.1 451.8 428.3 453.9C430.5 456.0 431.4 453.2 428.3 456.7C425.2 460.2 420.7 462.9 416.7 467.2C412.7 471.5 414.2 471.3 413.3 472.8"/>
</g>
<!-- lakes -->
<g fill="#1e8fff" stroke="none">
<path d="M382.400 249.300L383.300 252.100 381.700 261.100 375.400 259.700 376.100 256.250 379.600 250.700Z"/>
<path d="M384.400 246.500L389.700 243.300 387.200 247.900 385.100 248.300Z"/>
<path d="M373.300 263.900L377.200 261.800 376.400 268 374.700 267.400Z"/>
<path d="M361.100 231.250L365.700 233.600 364.300 236.400 362.900 236.100 363.300 233.600Z"/>
<path d="M388.500 281H390.300V283H388.500ZM396.600 276H398V277.500H396.600ZM447.200 272H449.500V275H447.200ZM477.200 260H479V261.800H477.200ZM479 265.500H481.200V268H479ZM543.800 297H545.200V298.800H543.800Z"/>
<path d="M524.400 252L526.800 256.500 525.200 259 524 257Z"/>
<path d="M483.500 298.400L486.300 305.200 482.500 304.600Z"/>
<path d="M535.600 308.900L542.900 306.100 543.700 308.500 538 310.500Z"/>
</g>

<g font-family="Liberation Sans, sans-serif" font-size="6.300" fill="#000" stroke="#fff" stroke-width="1.600" paint-order="stroke" stroke-linejoin="round" style="paint-order:stroke">
<text x="401" y="298.500">Swellendam</text>
<text x="409.800" y="331.300">Railton</text>
<text x="369" y="365.600">Bontebok</text><text x="369" y="373.600">National</text><text x="369" y="381.600">Park</text><text x="369" y="389.600">Reception</text><text x="369" y="397.600">&amp;</text><text x="369" y="405.600">Shop</text>
<text x="437" y="419.700">Lang</text><text x="437" y="427.800">Elsies</text><text x="437" y="435.900">Kraal</text><text x="437" y="444">Rest</text><text x="437" y="452.100">Camp</text>
</g>
</g>
</svg>
</div>
<div class="abs" style="left:601px;top:91px;width:1px;height:419px;background:#f8f7f5"></div>
<div class="abs lbl" style="left:611px;top:92px">Items</div>
<svg class="abs" style="left:948px;top:94px" width="28" height="13" viewBox="0 0 28 13"><use href="#dockbtns"/></svg>
<div class="abs" style="left:607px;top:110px;width:368px;height:95px;background:#fff;border:1px solid #b6b2ad"></div>
<div class="abs" style="left:608px;top:111px;width:366px;height:21px;background:linear-gradient(#fcfbfa,#ebe7e3);border-bottom:1px solid #cfcbc6"></div>
<div class="abs" style="left:664px;top:111px;width:1px;height:20px;background:#d3cfca"></div>
<div class="abs" style="left:721px;top:111px;width:1px;height:20px;background:#d3cfca"></div>
<div class="abs lbl" style="left:724px;top:113px;letter-spacing:.25px">Item</div>
<div class="abs" style="left:608px;top:132px;width:366px;height:19px;background:#308cc6"></div>
<div class="abs lbl" style="left:747px;top:132px;color:#fff">Swellendam</div>
<div class="abs lbl" style="left:747px;top:151px;letter-spacing:-.6px">Map 1</div>
<svg class="abs" style="left:608px;top:111px" width="140" height="60" viewBox="608 111 140 60">
<!-- eye -->
<path d="M611 121.500Q618.500 114 626 121.500Q618.500 127 611 121.500Z" fill="#f4f4f4" stroke="#8a8a8a" stroke-width=".8"/><path d="M612.500 118.500Q618.500 113.500 624.500 118.500" fill="none" stroke="#a9a9a9" stroke-width=".7"/><circle cx="618.500" cy="121" r="3" fill="#9a9a9a" stroke="#666" stroke-width=".6"/><circle cx="618.500" cy="121" r="1.300" fill="#333"/>
<!-- lock -->
<path d="M671.500 121V118.500Q671.500 115 675 115T678.500 118.500V121" fill="none" stroke="#9a9a9a" stroke-width="1.800"/><rect x="669" y="120.500" width="12" height="8.500" rx="1.500" fill="#5f5f5f"/>
<!-- checkboxes -->
<g fill="#fff" stroke="#c3bfba"><rect x="611.500" y="134.500" width="13" height="13" rx="1"/><rect x="668.500" y="134.500" width="13" height="13" rx="1"/><rect x="611.500" y="153.500" width="13" height="13" rx="1"/><rect x="668.500" y="153.500" width="13" height="13" rx="1"/></g>
<path d="M614 141L617 145.500 622 136.500M614 160L617 164.500 622 155.500" fill="none" stroke="#111" stroke-width="1.800"/>
<!-- T icon -->
<rect x="726.500" y="135.500" width="13" height="11" fill="#b9d4ec" stroke="#dfe9f2" stroke-width="1"/><text x="733" y="145" font-family="Liberation Serif, serif" font-size="10.500" text-anchor="middle" fill="#3a4a5a">T</text>
<!-- map icon -->
<path d="M728 153.500H739.500V165.500H729.500Q729 167 727.500 166.500T726.500 165V155Q726.500 153.500 728 153.500Z" fill="#d9d9d9" stroke="#8f8f8f" stroke-width=".9"/><path d="M729.500 154V165" stroke="#bdbdbd" stroke-width="1"/>
</svg>
<!-- splitter dots -->
<div class="abs" style="left:781px;top:207px;width:20px;height:1px;background:repeating-linear-gradient(90deg,#b5b1ab 0 1px,transparent 1px 3px)"></div>
<!-- tabs -->
<div class="abs" style="left:607px;top:238px;width:369px;height:1px;background:#c2beb9"></div>
<div class="abs tab" style="left:607px;top:213px;width:72px;height:25px"><span style="left:12px;top:4px;letter-spacing:.1px">Layout</span></div>
<div class="abs tab" style="left:809px;top:213px;width:71px;height:25px"><span style="left:12px;top:4px;letter-spacing:-.38px">Guides</span></div>
<div class="abs tab act" style="left:678px;top:211px;width:132px;height:28px"><span style="left:12px;top:5px;letter-spacing:.28px">Item Properties</span></div>
<div class="abs lbl" style="left:611px;top:241px;letter-spacing:.26px">Item Properties</div>
<svg class="abs" style="left:948px;top:243px" width="28" height="13" viewBox="0 0 28 13"><use href="#dockbtns"/></svg>
<div id="status"><div class="abs" style="left:40px;top:-1px;width:562px;height:1px;background:#bfbbb6"></div>
<div class="abs lbl" style="left:383px;top:7px;letter-spacing:-.13px">x: 173.218 mm</div>
<div class="abs lbl" style="left:490px;top:7px;letter-spacing:-.24px">y: -4.26947 mm</div>
<div class="abs lbl" style="left:600px;top:7px;letter-spacing:-.47px">page: 1</div>
<div class="abs" style="left:705px;top:3px;width:141px;height:25px;border:1px solid #b6b2ad;border-radius:3px;background:#fff;overflow:hidden"><div class="abs" style="left:119px;top:0;width:20px;height:23px;background:linear-gradient(#f6f5f3,#e9e6e2);border-left:1px solid #cfcbc6"></div><div class="abs" style="left:125px;top:10px;width:0;height:0;border-left:4px solid transparent;border-right:4px solid transparent;border-top:5px solid #444"></div><div class="abs lbl" style="left:4px;top:3px;letter-spacing:-.3px">43.4%</div></div>
<div class="abs" style="left:853px;top:13px;width:98px;height:5px;border:1px solid #b6b2ad;border-radius:3px;background:#d9d5d0"></div>
<div class="abs" style="left:853px;top:13px;width:6px;height:5px;border-radius:3px 0 0 3px;background:#3584c8"></div>
<div class="abs" style="left:856px;top:9px;width:13px;height:13px;border:1px solid #a9a5a0;border-radius:3px;background:linear-gradient(#fdfdfc,#e9e6e2)"></div>
<svg class="abs" style="left:964px;top:18px" width="12" height="12" viewBox="0 0 12 12" fill="#b9b5af"><rect x="9" y="0" width="1" height="1"/><rect x="6" y="3" width="1" height="1"/><rect x="9" y="3" width="1" height="1"/><rect x="3" y="6" width="1" height="1"/><rect x="6" y="6" width="1" height="1"/><rect x="9" y="6" width="1" height="1"/><rect x="0" y="9" width="1" height="1"/><rect x="3" y="9" width="1" height="1"/><rect x="6" y="9" width="1" height="1"/><rect x="9" y="9" width="1" height="1"/></svg>
</div>
<svg width="0" height="0" style="position:absolute"><defs><g id="dockbtns" fill="none" stroke="#333"><rect x="1.500" y="1.500" width="10" height="10" rx="2" stroke="#555"/><rect x="5.500" y="3.500" width="4" height="4" rx="1" stroke-width=".9"/><rect x="3.500" y="5.500" width="4" height="4" rx="1" fill="#efebe7" stroke-width=".9"/><rect x="15.500" y="1.500" width="10" height="10" rx="2" stroke="#555"/><path d="M18 4L23 9M23 4L18 9" stroke="#222" stroke-width="1.800"/></g></defs></svg>
</div>
</body></html>
